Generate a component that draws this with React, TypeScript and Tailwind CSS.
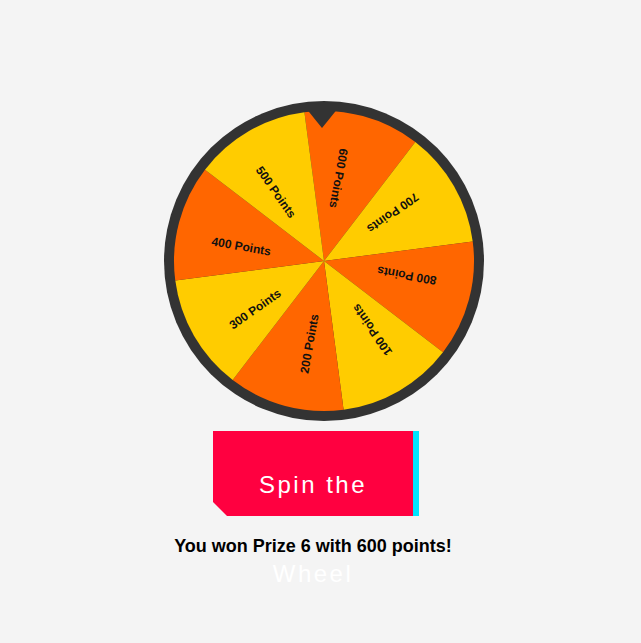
import React from "react";

const ORANGE = "#ff6600";
const YELLOW = "#ffcc00";

const segments = [
  { label: "600 Points", color: ORANGE },
  { label: "700 Points", color: YELLOW },
  { label: "800 Points", color: ORANGE },
  { label: "100 Points", color: YELLOW },
  { label: "200 Points", color: ORANGE },
  { label: "300 Points", color: YELLOW },
  { label: "400 Points", color: ORANGE },
  { label: "500 Points", color: YELLOW },
];

const C = 160;
const R = 150;

function pt(deg: number, r: number) {
  const a = (deg * Math.PI) / 180;
  return [C + r * Math.sin(a), C - r * Math.cos(a)];
}

function Wheel() {
  return (
    <svg width="320" height="320" viewBox="0 0 320 320" className="block">
      <circle cx={C} cy={C} r={160} fill="#333333" />
      {segments.map((s, k) => {
        const a0 = -7.5 + 45 * k;
        const a1 = a0 + 45;
        const [x0, y0] = pt(a0, R);
        const [x1, y1] = pt(a1, R);
        return (
          <path
            key={"p" + k}
            d={`M ${C} ${C} L ${x0} ${y0} A ${R} ${R} 0 0 1 ${x1} ${y1} Z`}
            fill={s.color}
          />
        );
      })}
      {segments.map((s, k) => {
        const phi = 10 + 45 * k;
        const [x, y] = pt(phi, 84);
        return (
          <text
            key={"t" + k}
            x={x}
            y={y}
            textAnchor="middle"
            dominantBaseline="central"
            transform={`rotate(${phi + 90} ${x} ${y})`}
            fontFamily="'Liberation Sans', Arial, sans-serif"
            fontWeight="bold"
            fontSize="12"
            fill="#111111"
          >
            {s.label}
          </text>
        );
      })}
      <polygon points="141,6 175,6 158,27" fill="#333333" />
    </svg>
  );
}

export default function App() {
  return (
    <div
      className="min-h-[643px] w-full bg-[#f4f4f4]"
      style={{ fontFamily: "'Liberation Sans', Arial, sans-serif" }}
    >
      <div className="flex w-[626px] flex-col items-center pt-[101px]">
        <div className="ml-[22px]">
          <Wheel />
        </div>
        <div className="relative mt-[10px] h-[85px] w-[200px] shadow-[6px_0_0_#00e5ff]">
          <div className="absolute inset-0 bg-[#ff0040] [clip-path:polygon(0_0,100%_0,100%_100%,14px_100%,0_calc(100%-14px))]" />
          <div className="relative px-5 pt-[9px] text-center text-[24px] leading-[89px] tracking-[2.5px] text-white">
            Spin the Wheel
          </div>
        </div>
        <div className="relative mt-[20px] text-[18px] font-bold leading-[21px] text-black">
          You won Prize 6 with 600 points!
        </div>
      </div>
    </div>
  );
}
